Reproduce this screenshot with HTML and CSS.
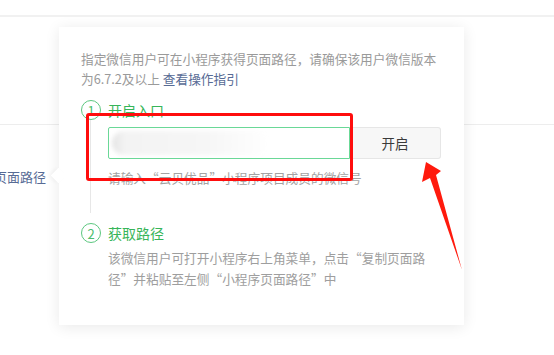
FILE: index.html
```html
<!DOCTYPE html>
<html lang="zh-CN">
<head>
    <meta charset="UTF-8">
    <title>页面路径</title>
    <link rel="stylesheet" href="styles.css">
</head>
<body>
    <div class="page">
        <div class="topline"></div>
        <div class="form">
            <div class="row row-empty"></div>
            <div class="row row-path">
                <span class="row-label">小程序页面路径</span>
            </div>
        </div>

        <!-- popover -->
        <div class="pop">
            <span class="pop-caret"></span>
            <p class="intro">指定微信用户可在小程序获得页面路径，请确保该用户微信版本<br>为6.7.2及以上 <a class="link" href="#">查看操作指引</a></p>

            <div class="step step-first">
                <div class="step-head"><span class="num">1</span>开启入口</div>
                <div class="step-body">
                    <div class="field">
                        <div class="input"><span class="blur"></span></div>
                        <button class="btn">开启</button>
                    </div>
                    <p class="hint">请输入“云贝优品”小程序项目成员的微信号</p>
                </div>
            </div>

            <div class="step">
                <div class="step-head"><span class="num">2</span>获取路径</div>
                <p class="desc">该微信用户可打开小程序右上角菜单，点击“复制页面路<br>径”并粘贴至左侧“小程序页面路径”中</p>
            </div>
        </div>

        <!-- annotations -->
        <div class="mark"></div>
        <svg class="arrow" width="554" height="355" viewBox="0 0 554 355">
            <polygon points="426,162 441,171 436,175 462,270 430,178 422,182" fill="#ff1a0d"/>
        </svg>
    </div>
</body>
</html>
```

FILE: styles.css
```css
body {
    margin: 0;
    font-family: "Noto Sans CJK SC", "Noto Sans", sans-serif;
    background-color: #ffffff;
}
.page {
    position: relative;
    width: 554px;
    height: 355px;
    overflow: hidden;
}
.topline {
    margin-top: 15px;
    height: 2px;
    background-color: #f1f1f1;
}
.row {
    border-bottom: 1px solid #ededed;
}
.row-empty {
    height: 107px;
}
.row-path {
    height: 62px;
    display: flex;
    align-items: flex-end;
    justify-content: flex-end;
    width: 46px;
    border-bottom: none;
}
.row-label {
    white-space: nowrap;
    font-size: 13px;
    line-height: 20px;
    color: #576b95;
}
.pop {
    position: absolute;
    left: 59px;
    top: 27px;
    width: 361px;
    height: 270px;
    padding: 22px 22px 6px 22px;
    background-color: #ffffff;
    box-shadow: 0 2px 14px rgba(0, 0, 0, 0.09);
}
.pop-caret {
    position: absolute;
    left: -6px;
    top: 143px;
    width: 11px;
    height: 11px;
    background-color: #ffffff;
    transform: rotate(45deg);
    box-shadow: -2px 2px 4px rgba(0, 0, 0, 0.04);
}
.intro {
    margin: 0;
    font-size: 12.7px;
    line-height: 20px;
    color: #9a9a9a;
    white-space: nowrap;
}
.link {
    color: #576b95;
    text-decoration: none;
}
.step-first {
    margin-top: 11px;
}
.step-head {
    display: flex;
    align-items: center;
    height: 20px;
    font-size: 14px;
    color: #37b559;
}
.num {
    box-sizing: border-box;
    width: 20px;
    height: 20px;
    margin-right: 7px;
    border: 1.3px solid #5cc77f;
    border-radius: 50%;
    display: flex;
    align-items: center;
    justify-content: center;
    font-size: 13px;
    line-height: 1;
    color: #4cbd6f;
}
.step-body {
    margin-left: 9px;
    padding: 7px 0 25px 17px;
    border-left: 1px solid #e7e7e7;
}
.field {
    display: flex;
    height: 32px;
}
.input {
    position: relative;
    box-sizing: border-box;
    width: 242px;
    border: 1px solid #6ad897;
    border-radius: 2px 0 0 2px;
    overflow: hidden;
}
.blur {
    position: absolute;
    left: 3px;
    top: 3px;
    width: 158px;
    height: 24px;
    border-radius: 12px;
    background: linear-gradient(90deg, #e4e4e4 0%, #f3f3f3 8%, #f6f6f6 60%, #ffffff 100%);
    filter: blur(2px);
}
.btn {
    box-sizing: border-box;
    width: 91px;
    height: 32px;
    border: 1px solid #e6e6e6;
    border-left: none;
    border-radius: 0 3px 3px 0;
    background-color: #f7f7f7;
    font-family: inherit;
    font-size: 13.5px;
    color: #3a3a3a;
    padding: 0;
}
.hint {
    margin: 9px 0 0 0;
    font-size: 12.7px;
    line-height: 20px;
    color: #a3a3a3;
    white-space: nowrap;
}
.step-first + .step {
    margin-top: 10px;
}
.desc {
    margin: 4px 0 0 27px;
    font-size: 12.7px;
    line-height: 21px;
    color: #9e9e9e;
    white-space: nowrap;
}
.mark {
    position: absolute;
    left: 86px;
    top: 113px;
    width: 261px;
    height: 62px;
    border: 3px solid #ff0d0d;
    border-radius: 3px;
}
.arrow {
    position: absolute;
    left: 0;
    top: 0;
}
```
